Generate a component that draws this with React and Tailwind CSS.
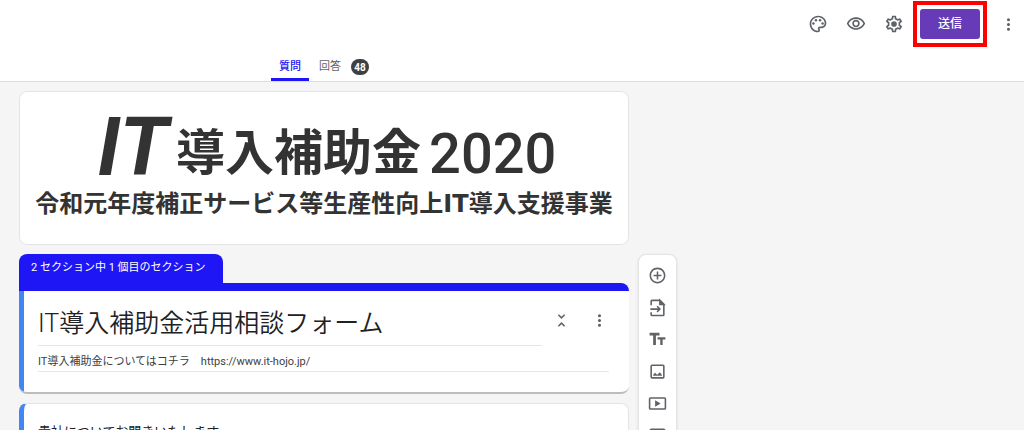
import React, { useState } from 'react';
import {
    MdMoreVert,
    MdOutlineAddCircleOutline,
    MdOutlinePalette,
    MdOutlineVisibility,
    MdUnfoldLess,
} from 'react-icons/md';

const SettingsIcon = () => (
    <svg width="20" height="20" viewBox="0 0 24 24" fill="currentColor" aria-hidden="true">
        <path d="M19.43 12.98c.04-.32.07-.64.07-.98 0-.34-.03-.66-.07-.98l2.11-1.65c.19-.15.24-.42.12-.64l-2-3.46a.5.5 0 0 0-.61-.22l-2.49 1c-.52-.4-1.08-.73-1.69-.98l-.38-2.65A.488.488 0 0 0 14 2h-4c-.25 0-.46.18-.49.42l-.38 2.65c-.61.25-1.17.59-1.69.98l-2.49-1a.566.566 0 0 0-.18-.03c-.17 0-.34.09-.43.25l-2 3.46c-.13.22-.07.49.12.64l2.11 1.65c-.04.32-.07.65-.07.98 0 .33.03.66.07.98l-2.11 1.65c-.19.15-.24.42-.12.64l2 3.46a.5.5 0 0 0 .61.22l2.49-1c.52.4 1.08.73 1.69.98l.38 2.65c.03.24.24.42.49.42h4c.25 0 .46-.18.49-.42l.38-2.65c.61-.25 1.17-.59 1.69-.98l2.49 1c.06.02.12.03.18.03.17 0 .34-.09.43-.25l2-3.46c.12-.22.07-.49-.12-.64l-2.11-1.65zm-1.98-1.71c.04.31.05.52.05.73 0 .21-.02.43-.05.73l-.14 1.13.89.7 1.08.84-.7 1.21-1.27-.51-1.04-.42-.9.68c-.43.32-.84.56-1.25.73l-1.06.43-.16 1.13-.2 1.35h-1.4l-.19-1.35-.16-1.13-1.06-.43c-.43-.18-.83-.41-1.23-.71l-.91-.7-1.06.43-1.27.51-.7-1.21 1.08-.84.89-.7-.14-1.13c-.03-.31-.05-.54-.05-.74s.02-.43.05-.73l.14-1.13-.89-.7-1.08-.84.7-1.21 1.27.51 1.04.42.9-.68c.43-.32.84-.56 1.25-.73l1.06-.43.16-1.13.2-1.35h1.39l.19 1.35.16 1.13 1.06.43c.43.18.83.41 1.23.71l.91.7 1.06-.43 1.27-.51.7 1.21-1.07.85-.89.7.14 1.13z" />
        <circle cx="12" cy="12" r="3.4" />
    </svg>
);

const ImportIcon = () => (
    <svg width="19" height="19" viewBox="0 0 24 24" fill="none" stroke="currentColor" strokeWidth="2" aria-hidden="true">
        <path d="M4 9V4a1 1 0 0 1 1-1h10l5 5v13a1 1 0 0 1-1 1H5a1 1 0 0 1-1-1v-3" />
        <path d="M15 3v5h5z" fill="currentColor" />
        <path d="M3 14h11M11.500 10.500 15 14l-3.500 3.500" />
    </svg>
);

const TitleIcon = () => (
    <svg width="19" height="19" viewBox="0 0 24 24" fill="currentColor" aria-hidden="true">
        <path d="M2 3.500v3.500h4.500v12h3.500V7h4.500V3.500zM12 9v3h3.500v7h3v-7H22V9z" />
    </svg>
);

const ImageIcon = () => (
    <svg width="19" height="19" viewBox="0 0 24 24" fill="currentColor" aria-hidden="true">
        <path d="M19 5v14H5V5h14m0-2H5a2 2 0 0 0-2 2v14a2 2 0 0 0 2 2h14a2 2 0 0 0 2-2V5a2 2 0 0 0-2-2z" />
        <path d="M6.500 17.500v-1.500l2.500-2.500 2.500 2.500 3.500-3 2.500 3v1.500z" />
    </svg>
);

const VideoIcon = () => (
    <svg width="19" height="19" viewBox="0 0 24 24" fill="currentColor" aria-hidden="true">
        <path d="M21 4H3a2 2 0 0 0-2 2v12a2 2 0 0 0 2 2h18a2 2 0 0 0 2-2V6a2 2 0 0 0-2-2zm0 14H3V6h18z" />
        <path d="M9 8v8l7-4z" />
    </svg>
);

const SectionIcon = () => (
    <svg width="19" height="19" viewBox="0 0 24 24" fill="none" stroke="currentColor" strokeWidth="2" aria-hidden="true">
        <rect x="3" y="4" width="18" height="6" rx="1" />
        <rect x="3" y="14" width="18" height="6" rx="1" />
    </svg>
);

const tools = [
    { label: '質問を追加', icon: <MdOutlineAddCircleOutline size={19} /> },
    { label: '質問をインポート', icon: <ImportIcon /> },
    { label: 'タイトルと説明を追加', icon: <TitleIcon /> },
    { label: '画像を追加', icon: <ImageIcon /> },
    { label: '動画を追加', icon: <VideoIcon /> },
    { label: 'セクションを追加', icon: <SectionIcon /> },
];

const IconButton = ({ label, children }) => (
    <button type="button" aria-label={label} className="flex size-[38px] items-center justify-center text-[#5f6368]">
        {children}
    </button>
);

const Header = () => (
    <header className="shrink-0 border-b border-[#dadce0] bg-white">
        <div className="flex h-12 items-center justify-end">
            <IconButton label="テーマをカスタマイズ">
                <MdOutlinePalette size={20} />
            </IconButton>
            <IconButton label="プレビュー">
                <MdOutlineVisibility size={20} />
            </IconButton>
            <IconButton label="設定">
                <SettingsIcon />
            </IconButton>
            <div className="mr-[5px] border-4 border-[#ff0000] px-[3px] py-1">
                <button type="button" className="block h-[30px] w-[60px] rounded-[3px] bg-[#673ab7] text-xs font-medium text-white">
                    送信
                </button>
            </div>
            <button type="button" aria-label="その他" className="flex h-[38px] w-8 items-center justify-center text-[#5f6368]">
                <MdMoreVert size={19} />
            </button>
        </div>
        <nav className="flex h-[33px] max-w-[640px] justify-center gap-[10px] text-[11px]">
            <a href="#questions" className="flex items-center border-b-3 border-[#1e16f4] px-2 pt-2 font-medium text-[#1e16f4]">
                質問
            </a>
            <a href="#responses" className="flex items-center gap-[10px] pt-[5px] text-[#5f6368]">
                回答
                <span className="flex h-4 w-[18px] items-center justify-center rounded-full bg-[#3c4043] text-[10px] font-bold text-white">
                    48
                </span>
            </a>
        </nav>
    </header>
);

const Banner = () => (
    <div className="flex h-[154px] flex-col items-center overflow-hidden rounded-lg border border-[#e4e4e4] bg-white pt-[22px] font-bold whitespace-nowrap text-[#333333]">
        <div className="flex items-start pl-[6px] leading-[68px]">
            <span className="mr-2 text-[81px] italic">IT</span>
            <span className="mt-[6px] mr-2 text-[49px]">導入補助金</span>
            <span className="mt-[6px] text-[56px] font-medium">2020</span>
        </div>
        <div className="font-['DejaVu_Sans','Noto_Sans_CJK_JP',sans-serif] text-2xl leading-[32px]">
            令和元年度補正サービス等生産性向上IT導入支援事業
        </div>
    </div>
);

const SectionCard = () => {
    const [title, setTitle] = useState('IT導入補助金活用相談フォーム');
    const [description, setDescription] = useState('IT導入補助金についてはコチラ　https://www.it-hojo.jp/');

    return (
        <section>
            <div className="flex">
                <h2 className="h-[29px] w-[204px] rounded-t-lg bg-[#1e16f4] px-3 text-[11px] leading-[28px] whitespace-nowrap text-white">
                    2 セクション中 1 個目のセクション
                </h2>
            </div>
            <div className="overflow-hidden rounded-b-lg rounded-tr-lg border-b-2 border-[#bdbdbd] bg-white">
                <div className="h-2 bg-[#1e16f4]"></div>
                <div className="h-[101px] border-l-5 border-[#4285f4] pt-[10px] pl-[14px]">
                    <div className="flex pr-[11px]">
                        <input
                            aria-label="フォームのタイトル"
                            value={title}
                            onChange={(e) => setTitle(e.target.value)}
                            className="h-[45px] min-w-0 flex-1 border-b border-[#e6e6e6] bg-transparent pb-1 text-[25px] font-[350] text-[#202124] outline-none"
                        />
                        <IconButton label="セクションを折りたたむ">
                            <MdUnfoldLess size={19} />
                        </IconButton>
                        <IconButton label="セクションのその他の操作">
                            <MdMoreVert size={19} />
                        </IconButton>
                    </div>
                    <div className="pr-5">
                        <input
                            aria-label="フォームの説明"
                            value={description}
                            onChange={(e) => setDescription(e.target.value)}
                            className="block h-[26px] w-full border-b border-[#e6e6e6] bg-transparent pt-[2px] text-[11px] text-[#3c4043] outline-none"
                        />
                    </div>
                </div>
            </div>
        </section>
    );
};

const App = () => (
    <div className="flex h-screen flex-col overflow-hidden bg-[#f5f5f5] font-[Roboto,'Noto_Sans_CJK_JP',sans-serif]">
        <Header />
        <main className="flex min-h-0 flex-1 items-start overflow-hidden pt-[9px] pl-[19px]">
            <div className="flex w-full max-w-[610px] flex-col gap-[9px]">
                <Banner />
                <SectionCard />
                <section className="h-24 rounded-lg border border-l-5 border-[#e4e4e4] border-l-[#4285f4] bg-white px-[14px] pt-[18px] text-[13px] text-[#202124]">
                    貴社についてお聞きいたします
                </section>
            </div>
            <div className="mt-[163px] ml-[9px] flex w-[39px] shrink-0 flex-col items-center rounded-lg border border-[#e4e4e4] bg-white py-1 text-[#5f6368] shadow-sm">
                {tools.map((tool) => (
                    <button key={tool.label} type="button" aria-label={tool.label} className="flex h-8 w-full items-center justify-center">
                        {tool.icon}
                    </button>
                ))}
            </div>
        </main>
    </div>
);

export default App;
